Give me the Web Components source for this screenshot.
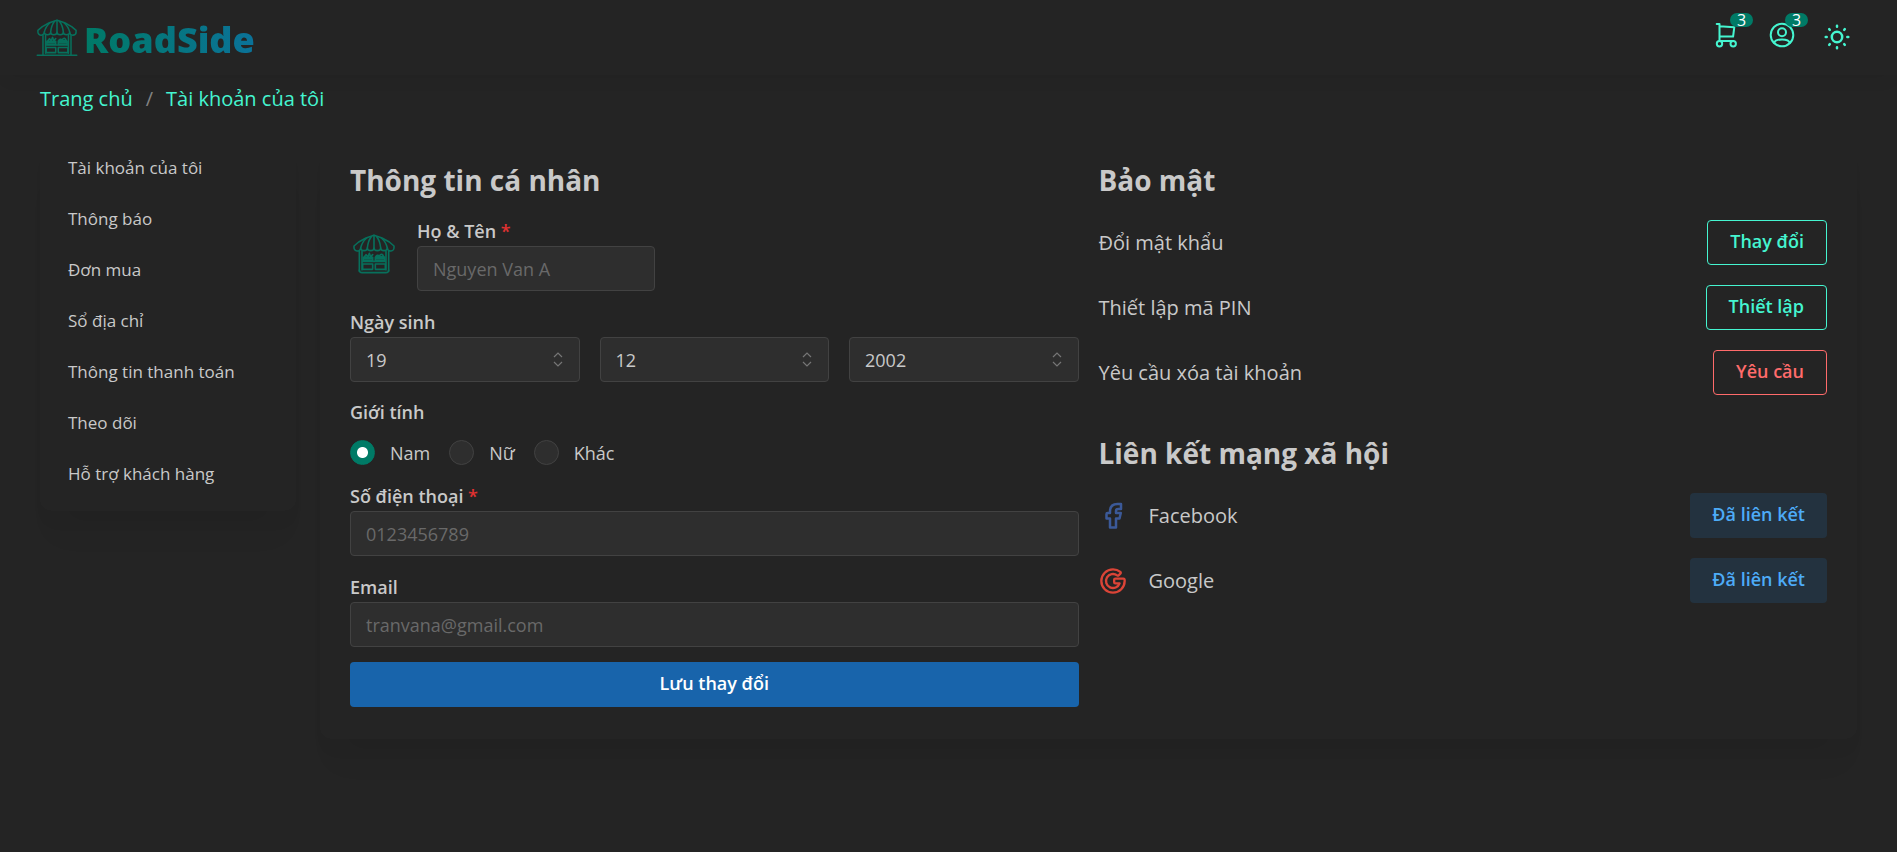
<!DOCTYPE html>
<html lang="vi">
<head>
<meta charset="utf-8">
<meta name="viewport" content="width=device-width, initial-scale=1">
<title>RoadSide – Tài khoản của tôi</title>
<style>
  :root {
    --bg: #242424;
    --text: #c9c9c9;
    --field: #2e2e2e;
    --line: #424242;
    --dim: #696969;
    --teal: #07705c;
    --teal-deep: #007a66;
    --mint: #45f5d0;
    --red: #ff6b6b;
    --required: #e03131;
    --shadow: 0 36px 28px -14px rgba(0,0,0,.04), 0 17px 17px -7px rgba(0,0,0,.03);
  }
  body {
    margin: 0;
    background: var(--bg);
    color: var(--text);
    font: 18px/28px "Open Sans", "Noto Sans", sans-serif;
  }
</style>
</head>
<body>
<app-shell></app-shell>

<template id="t-app-shell">
  <style>
    :host { display: block; }
    .page { padding: 12px 40px 80px; }
    .columns { display: grid; grid-template-columns: 256px minmax(0, 1fr); gap: 24px; align-items: start; padding-top: 24px; }
  </style>
  <app-header></app-header>
  <div class="page">
    <bread-crumbs></bread-crumbs>
    <div class="columns">
      <side-nav></side-nav>
      <account-panel></account-panel>
    </div>
  </div>
</template>

<template id="t-app-header">
  <style>
    :host { display: block; box-shadow: 0 10px 15px -5px rgba(0,0,0,.05); }
    header { display: flex; align-items: center; justify-content: space-between; height: 75px; padding: 0 46px 0 36px; }
    .brand { display: flex; align-items: center; gap: 6px; text-decoration: none; }
    .name { padding-top: 4px; font-size: 36px; line-height: 48px; font-weight: 800; background: linear-gradient(90deg, #007a66, #0b7299); -webkit-background-clip: text; background-clip: text; color: transparent; }
    shop-logo { width: 42px; height: 42px; }
    nav { display: flex; align-items: center; gap: 27px; padding-bottom: 1px; }
    button { position: relative; width: 28px; height: 28px; padding: 0; border: 0; background: none; color: var(--mint); }
    .counted { margin-bottom: 4px; }
    svg { display: block; width: 28px; height: 28px; fill: none; stroke: currentColor; stroke-width: 2; stroke-linecap: round; stroke-linejoin: round; }
    .sun { stroke-width: 2.500; }
    .badge { position: absolute; top: -8px; left: 17px; width: 23px; height: 14px; border-radius: 7px; background: var(--teal-deep); color: #fff; font: 16px/14px "Open Sans", sans-serif; text-align: center; }
  </style>
  <header>
    <a class="brand" href="#"><shop-logo stand></shop-logo><span class="name">RoadSide</span></a>
    <nav>
      <button class="counted" type="button" aria-label="Giỏ hàng">
        <svg viewBox="0 0 28 28"><circle cx="6.500" cy="22.700" r="2.700"/><circle cx="20.200" cy="22.700" r="2.700"/><path d="M3.700 3h2.800v17h13.700M6.500 5.200l14.800 1-1.200 9.300H6.500"/></svg>
        <span class="badge">3</span>
      </button>
      <button class="counted" type="button" aria-label="Tài khoản">
        <svg viewBox="0 0 28 28"><circle cx="14" cy="14" r="11.300"/><circle cx="14" cy="11.200" r="4"/><path d="M6.300 22q.7-3.500 7.700-3.500t7.700 3.500"/></svg>
        <span class="badge">3</span>
      </button>
      <button type="button" aria-label="Đổi giao diện">
        <svg class="sun" viewBox="0 0 28 28"><circle cx="14" cy="14" r="5.200"/><path d="M14 2.700v1M14 24.300v1M2.700 14h1M24.300 14h1M6.200 6.200l.6.6M21.200 21.200l.6.6M6.200 21.800l.6-.6M21.200 6.800l.6-.6"/></svg>
      </button>
    </nav>
  </header>
</template>

<template id="t-shop-logo">
  <style>
    :host { display: block; }
    svg { display: block; width: 100%; height: 100%; fill: none; stroke: var(--teal); stroke-width: 2.400; stroke-linejoin: round; stroke-linecap: round; }
    .base { display: none; }
    :host([stand]) .base { display: inline; }
    :host([stand]) .round { display: none; }
  </style>
  <svg viewBox="-1 -1 66 66" aria-hidden="true">
    <path d="M32 4 20 8 9 14 2 20v2a5 5 0 0 0 10 1 5 4 0 0 0 10 0 5 4 0 0 0 10 0 5 4 0 0 0 10 0 5 4 0 0 0 10 0 5 5 0 0 0 10-1v-2L55 14 44 8z"/>
    <path d="M12 23q2-9 9-15M22 23q1-11 6-17M32 23V4M42 23q-1-11-6-17M52 23q-2-9-9-15"/>
    <path d="M10 28v30M14 28v28M54 28v30M50 28v28M14 43h36"/>
    <path d="M16 42h14v-5H16zM34 42h14v-5H34zM17 37l3-4 3 3 2-5 2 5 3-3M34 37q3-5 6-2 4-6 7 2M18 39h11M35 36h12M36 39h11"/>
    <path d="M15 47h15v8H15zM34 47h15v8H34z"/>
    <path class="base" d="M1 59h62"/>
    <path class="round" d="M10 56q0 4 4 4h36q4 0 4-4"/>
  </svg>
</template>

<template id="t-bread-crumbs">
  <style>
    :host { display: block; }
    ol { display: flex; gap: 13px; margin: 0; padding: 0; list-style: none; font-size: 20px; line-height: 24px; }
    a { color: var(--mint); text-decoration: none; }
    .sep { color: #828282; }
  </style>
  <nav aria-label="Breadcrumb"><ol>
    <li><a href="#">Trang chủ</a></li>
    <li class="sep" aria-hidden="true">/</li>
    <li><a href="#">Tài khoản của tôi</a></li>
  </ol></nav>
</template>

<template id="t-side-nav">
  <style>
    :host { display: block; border-radius: 12px; box-shadow: var(--shadow); }
    ul { margin: 0; padding: 7px 0 12px; list-style: none; font-size: 17px; }
    a { display: block; padding: 12px 28px 11px; color: inherit; text-decoration: none; }
  </style>
  <nav aria-label="Tài khoản"><ul>
    <li><a href="#">Tài khoản của tôi</a></li>
    <li><a href="#">Thông báo</a></li>
    <li><a href="#">Đơn mua</a></li>
    <li><a href="#">Sổ địa chỉ</a></li>
    <li><a href="#">Thông tin thanh toán</a></li>
    <li><a href="#">Theo dõi</a></li>
    <li><a href="#">Hỗ trợ khách hàng</a></li>
  </ul></nav>
</template>

<template id="t-account-panel">
  <style>
    :host { display: block; border-radius: 12px; box-shadow: var(--shadow); }
    .grid { display: grid; grid-template-columns: repeat(2, minmax(0, 1fr)); gap: 20px; padding: 25px 30px 32px; }
    h2 { margin: 0; font-size: 28px; line-height: 40px; font-weight: 700; }
    form { display: flex; flex-direction: column; }
    .who { display: flex; align-items: center; gap: 21px; margin: 18px 0; }
    .who shop-logo { width: 44px; height: 44px; margin: 0 0 2px 2px; }
    .who form-field { width: 238px; }
    .date { display: grid; grid-template-columns: repeat(3, minmax(0, 1fr)); gap: 20px; }
    fieldset { min-width: 0; margin: 0; padding: 0; border: 0; }
    legend { padding: 0 0 2px; line-height: 26px; font-weight: 600; }
    .choices { display: flex; gap: 19px; padding: 13px 0 18px; }
    .choices label { display: flex; align-items: center; gap: 15px; height: 25px; }
    .choices input { appearance: none; width: 25px; height: 25px; margin: 0; border: 1px solid var(--line); border-radius: 50%; background: var(--field); }
    .choices input:checked { border-color: var(--teal-deep); background: radial-gradient(circle, #fff 5px, var(--teal-deep) 6px); }
    .birth { margin-bottom: 17px; }
    .phone { margin-bottom: 18px; }
    ui-button.save { margin-top: 15px; }
    .rows { display: grid; gap: 20px; padding: 20px 0 38px; }
  </style>
  <div class="grid">
    <form>
      <h2>Thông tin cá nhân</h2>
      <div class="who">
        <shop-logo></shop-logo>
        <form-field label="Họ &amp; Tên" placeholder="Nguyen Van A" required></form-field>
      </div>
      <fieldset class="birth">
        <legend>Ngày sinh</legend>
        <div class="date">
          <picker-field label="Ngày" value="19"></picker-field>
          <picker-field label="Tháng" value="12"></picker-field>
          <picker-field label="Năm" value="2002"></picker-field>
        </div>
      </fieldset>
      <fieldset>
        <legend>Giới tính</legend>
        <div class="choices">
          <label><input type="radio" name="gender" checked>Nam</label>
          <label><input type="radio" name="gender">Nữ</label>
          <label><input type="radio" name="gender">Khác</label>
        </div>
      </fieldset>
      <form-field class="phone" label="Số điện thoại" type="tel" placeholder="0123456789" required></form-field>
      <form-field label="Email" type="email" placeholder="tranvana@gmail.com"></form-field>
      <ui-button class="save" variant="filled">Lưu thay đổi</ui-button>
    </form>
    <div>
      <h2>Bảo mật</h2>
      <div class="rows">
        <setting-row>Đổi mật khẩu<ui-button slot="action" variant="outline">Thay đổi</ui-button></setting-row>
        <setting-row>Thiết lập mã PIN<ui-button slot="action" variant="outline">Thiết lập</ui-button></setting-row>
        <setting-row>Yêu cầu xóa tài khoản<ui-button slot="action" variant="danger">Yêu cầu</ui-button></setting-row>
      </div>
      <h2>Liên kết mạng xã hội</h2>
      <div class="rows">
        <setting-row><brand-icon slot="icon" name="facebook"></brand-icon>Facebook<ui-button slot="action" variant="light">Đã liên kết</ui-button></setting-row>
        <setting-row><brand-icon slot="icon" name="google"></brand-icon>Google<ui-button slot="action" variant="light">Đã liên kết</ui-button></setting-row>
      </div>
    </div>
  </div>
</template>

<template id="t-form-field">
  <style>
    :host { display: block; }
    label { display: block; padding-bottom: 2px; line-height: 26px; font-weight: 600; }
    .star { color: var(--required); }
    input { display: block; box-sizing: border-box; width: 100%; height: 45px; padding: 0 15px; border: 1px solid var(--line); border-radius: 4px; background: var(--field); color: var(--text); font: inherit; outline: 0; }
    input::placeholder { color: var(--dim); opacity: 1; }
  </style>
  <label for="field"><span class="text"></span><span class="star" aria-hidden="true"></span></label>
  <input id="field">
</template>

<template id="t-picker-field">
  <style>
    :host { display: grid; align-items: center; }
    select, svg { grid-area: 1 / 1; }
    select { appearance: none; box-sizing: border-box; width: 100%; height: 45px; padding: 0 15px; border: 1px solid var(--line); border-radius: 4px; background: var(--field); color: var(--text); font: inherit; }
    svg { justify-self: end; width: 20px; height: 20px; margin-right: 12px; pointer-events: none; fill: none; stroke: #767676; stroke-width: 1.200; }
  </style>
  <select><option></option></select>
  <svg viewBox="0 0 20 20" aria-hidden="true"><path d="M6 7l4-4 4 4M6 12l4 4 4-4"/></svg>
</template>

<template id="t-ui-button">
  <style>
    :host { display: block; }
    button { display: block; box-sizing: border-box; width: 100%; height: 45px; padding: 0 22px 3px; border: 1px solid transparent; border-radius: 4px; background: none; font: inherit; font-weight: 600; white-space: nowrap; }
    :host([variant=filled]) button { background: #1864ab; color: #fff; }
    :host([variant=outline]) button { border-color: var(--mint); color: var(--mint); }
    :host([variant=danger]) button { border-color: var(--red); color: var(--red); }
    :host([variant=light]) button { padding: 0 21px 3px; background: #23323f; color: #4dabf7; }
  </style>
  <button type="button"><slot></slot></button>
</template>

<template id="t-setting-row">
  <style>
    :host { display: flex; align-items: center; height: 45px; font-size: 20px; }
    ::slotted([slot=icon]) { margin-right: 22px; }
    ::slotted([slot=action]) { margin-left: auto; font-size: 18px; }
  </style>
  <slot name="icon"></slot><slot></slot><slot name="action"></slot>
</template>

<template id="t-brand-icon">
  <style>
    :host { display: block; width: 28px; height: 28px; }
    svg { display: none; width: 28px; height: 28px; fill: none; stroke-width: 2; stroke-linecap: round; stroke-linejoin: round; }
    :host([name=facebook]) .facebook, :host([name=google]) .google { display: block; }
    .facebook { stroke: #3b5998; stroke-width: 2.500; }
    .google { stroke: #db4437; }
  </style>
  <svg class="facebook" viewBox="0 0 28 28" aria-hidden="true"><path d="M22 2h-3.500q-7.500 0-7.500 7.500V11H8.500q-1 0-1 1v4.500H11v9h6v-9h3.500l1.300-5.500H17V9q0-2 2-2h3z"/></svg>
  <svg class="google" viewBox="0 0 24 24" aria-hidden="true"><path d="M12 2a9.960 9.960 0 0 1 6.290 2.226 1 1 0 0 1 .04 1.520l-1.510 1.360a1 1 0 0 1-1.265.06 6 6 0 1 0 2.103 6.836l.001-.004H14a1 1 0 0 1-1-1v-2a1 1 0 0 1 1-1h6.945a1 1 0 0 1 .994.890q.06.550.061 1.110c0 5.523-4.477 10-10 10S2 17.523 2 12 6.477 2 12 2z"/></svg>
</template>

<script>
  class Part extends HTMLElement {
    constructor() {
      super();
      const template = document.getElementById('t-' + this.localName);
      this.attachShadow({ mode: 'open' }).append(template.content.cloneNode(true));
    }
  }

  class FormField extends Part {
    connectedCallback() {
      const input = this.shadowRoot.querySelector('input');
      this.shadowRoot.querySelector('.text').textContent = this.getAttribute('label');
      input.type = this.getAttribute('type') || 'text';
      input.placeholder = this.getAttribute('placeholder') || '';
      input.required = this.hasAttribute('required');
      this.shadowRoot.querySelector('.star').textContent = input.required ? ' *' : '';
    }
  }

  class PickerField extends Part {
    connectedCallback() {
      this.shadowRoot.querySelector('option').textContent = this.getAttribute('value');
      this.shadowRoot.querySelector('select').setAttribute('aria-label', this.getAttribute('label'));
    }
  }

  customElements.define('shop-logo', class extends Part {});
  customElements.define('brand-icon', class extends Part {});
  customElements.define('ui-button', class extends Part {});
  customElements.define('form-field', FormField);
  customElements.define('picker-field', PickerField);
  customElements.define('setting-row', class extends Part {});
  customElements.define('bread-crumbs', class extends Part {});
  customElements.define('side-nav', class extends Part {});
  customElements.define('account-panel', class extends Part {});
  customElements.define('app-header', class extends Part {});
  customElements.define('app-shell', class extends Part {});
</script>
</body>
</html>
